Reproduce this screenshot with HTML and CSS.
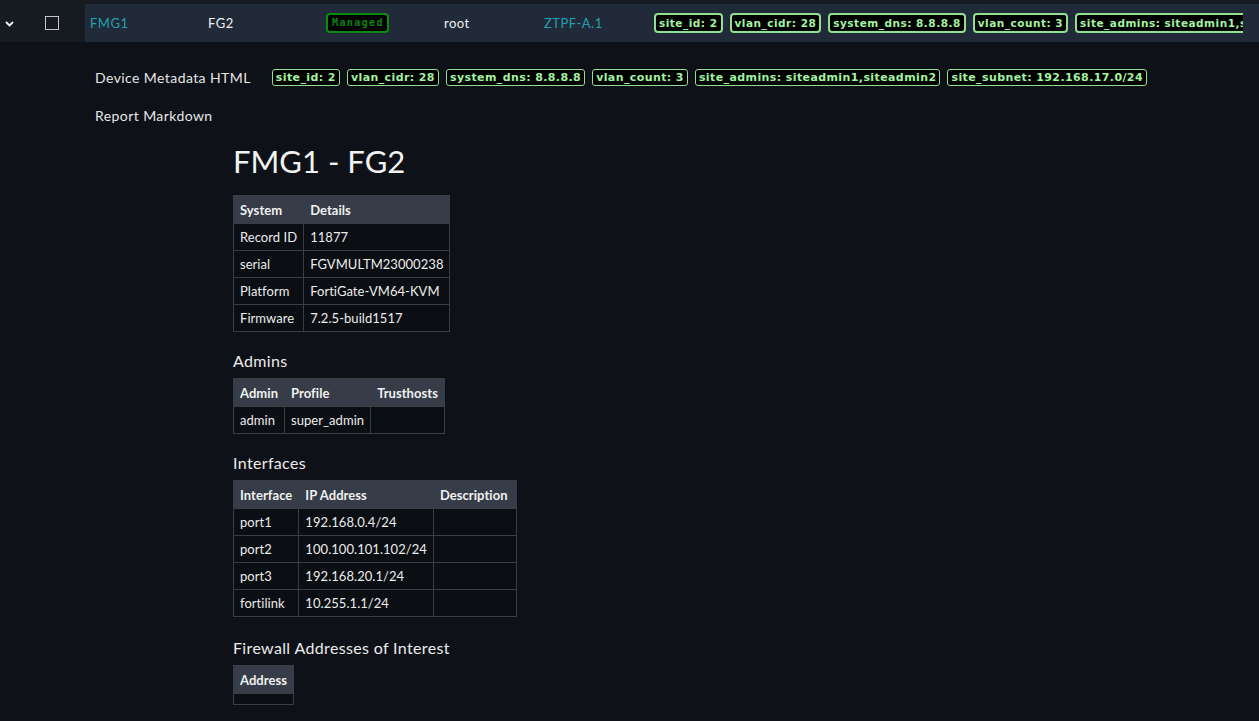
FILE: index.html
```html
<!DOCTYPE html>
<html>
<head>
<meta charset="utf-8">
<link rel="stylesheet" href="styles.css">
</head>
<body>
<div class="strip"></div>
<div class="row">
  <div class="row-ctrl">
    <svg class="chev" width="9" height="6" viewBox="0 0 9 6"><path d="M1 1 L4.5 4.5 L8 1" fill="none" stroke="#f2f2f2" stroke-width="1.8"/></svg>
    <span class="check"></span>
  </div>
  <div class="row-main">
    <span class="cell c1 link">FMG1</span>
    <span class="cell c2">FG2</span>
    <span class="cell c3"><span class="managed">Managed</span></span>
    <span class="cell c4">root</span>
    <span class="cell c5 link">ZTPF-A.1</span>
    <span class="cell c6">
      <span class="tag">site_id: 2</span>
      <span class="tag">vlan_cidr: 28</span>
      <span class="tag">system_dns: 8.8.8.8</span>
      <span class="tag">vlan_count: 3</span>
      <span class="tag">site_admins: siteadmin1,siteadmin2</span>
      <span class="tag">site_subnet: 192.168.17.0/24</span>
    </span>
  </div>
</div>
<div class="detail">
  <div class="meta-row">
    <span class="label">Device Metadata HTML</span>
    <span class="meta-tags">
      <span class="mtag">site_id: 2</span>
      <span class="mtag">vlan_cidr: 28</span>
      <span class="mtag">system_dns: 8.8.8.8</span>
      <span class="mtag">vlan_count: 3</span>
      <span class="mtag">site_admins: siteadmin1,siteadmin2</span>
      <span class="mtag">site_subnet: 192.168.17.0/24</span>
    </span>
  </div>
  <div class="label report-label">Report Markdown</div>
  <div class="report">
    <h1>FMG1 - FG2</h1>
    <table>
      <tr><th>System</th><th>Details</th></tr>
      <tr><td>Record ID</td><td>11877</td></tr>
      <tr><td>serial</td><td>FGVMULTM23000238</td></tr>
      <tr><td>Platform</td><td>FortiGate-VM64-KVM</td></tr>
      <tr><td>Firmware</td><td>7.2.5-build1517</td></tr>
    </table>
    <h3>Admins</h3>
    <table>
      <tr><th>Admin</th><th>Profile</th><th>Trusthosts</th></tr>
      <tr><td>admin</td><td>super_admin</td><td></td></tr>
    </table>
    <h3>Interfaces</h3>
    <table>
      <tr><th>Interface</th><th>IP Address</th><th class="wide">Description</th></tr>
      <tr><td>port1</td><td>192.168.0.4/24</td><td></td></tr>
      <tr><td>port2</td><td>100.100.101.102/24</td><td></td></tr>
      <tr><td>port3</td><td>192.168.20.1/24</td><td></td></tr>
      <tr><td>fortilink</td><td>10.255.1.1/24</td><td></td></tr>
    </table>
    <h3 class="fw">Firewall Addresses of Interest</h3>
    <table>
      <tr><th>Address</th></tr>
      <tr><td class="empty"></td></tr>
    </table>
  </div>
</div>
</body>
</html>
```
FILE: styles.css
```css
html, body {
  margin: 0;
  padding: 0;
  background: #0e1117;
  font-family: Lato, "Liberation Sans", sans-serif;
  color: #e6e6e6;
  overflow: hidden;
}
.strip {
  height: 4px;
  background: #161b22;
}
.row {
  display: flex;
  height: 38px;
}
.row-ctrl {
  width: 85px;
  flex: none;
  background: #161b22;
  display: flex;
  align-items: center;
}
.chev {
  margin-left: 5px;
  margin-top: 1px;
}
.check {
  width: 12px;
  height: 12px;
  border: 1px solid #c4c4c4;
  margin-left: 31px;
}
.row-main {
  flex: 1;
  min-width: 0;
  background: #212a38;
  display: flex;
  align-items: center;
  padding-left: 5px;
  padding-right: 16px;
  font-size: 13px;
  letter-spacing: 0.5px;
  overflow: hidden;
}
.cell { flex: none; color: #f0f0f0; }
.c1 { width: 118px; }
.c2 { width: 118px; }
.c3 { width: 118px; letter-spacing: 0; }
.c4 { width: 100px; }
.c5 { width: 110px; }
.c6 {
  flex: 1;
  min-width: 0;
  overflow: hidden;
  white-space: nowrap;
  display: flex;
  gap: 7px;
}
.link { color: #23a0b0; }
.managed {
  display: inline-block;
  background: #000;
  border: 2px solid #0c8a12;
  border-radius: 4px;
  color: #0a840f;
  font-family: "DejaVu Sans Mono", monospace;
  font-weight: bold;
  font-size: 10px;
  letter-spacing: 1.4px;
  padding: 2px 3px 2px 4px;
  line-height: 12px;
}
.tag {
  flex: none;
  background: #000;
  border: 2px solid #8fe08f;
  border-radius: 4px;
  color: #a2f2a2;
  font-family: "DejaVu Sans", sans-serif;
  font-weight: bold;
  font-size: 10.5px;
  letter-spacing: 0.5px;
  line-height: 14px;
  padding: 1px 3px;
}
.detail {
  padding-left: 95px;
}
.meta-row {
  display: flex;
  align-items: center;
  margin-top: 25px;
  height: 20px;
}
.label {
  font-size: 14px;
  letter-spacing: 0.42px;
  color: #e6e6e6;
}
.meta-tags {
  margin-left: 21px;
  display: flex;
  gap: 7px;
}
.mtag {
  background: #000;
  border: 1px solid #8fe08f;
  border-radius: 3px;
  color: #a2f2a2;
  font-family: "DejaVu Sans", sans-serif;
  font-weight: bold;
  font-size: 11px;
  letter-spacing: 0.4px;
  line-height: 15px;
  padding: 0 3px;
}
.report-label {
  margin-top: 19px;
  line-height: 20px;
}
.report {
  margin-left: 138px;
}
h1 {
  font-size: 31px;
  font-weight: normal;
  line-height: 40px;
  margin: 15px 0 14px 0;
  color: #f2f2f2;
}
h3 {
  font-size: 16px;
  font-weight: normal;
  letter-spacing: 0.35px;
  line-height: 24px;
  margin: 17px 0 5px 0;
  color: #ececec;
}
h3.fw {
  margin: 19px 0 5px 0;
}
table {
  border-collapse: collapse;
  font-size: 13px;
  letter-spacing: 0.05px;
}
th, td {
  border: 1px solid #3a3d44;
  padding: 0 6px;
  height: 26px;
  text-align: left;
  white-space: nowrap;
}
th {
  background: #363c48;
  font-weight: bold;
  height: 27px;
  color: #f0f0f0;
}
td {
  background: #0b0e13;
  color: #ececec;
}
th.wide { width: 70px; }
td.empty { height: 10px; }
```
